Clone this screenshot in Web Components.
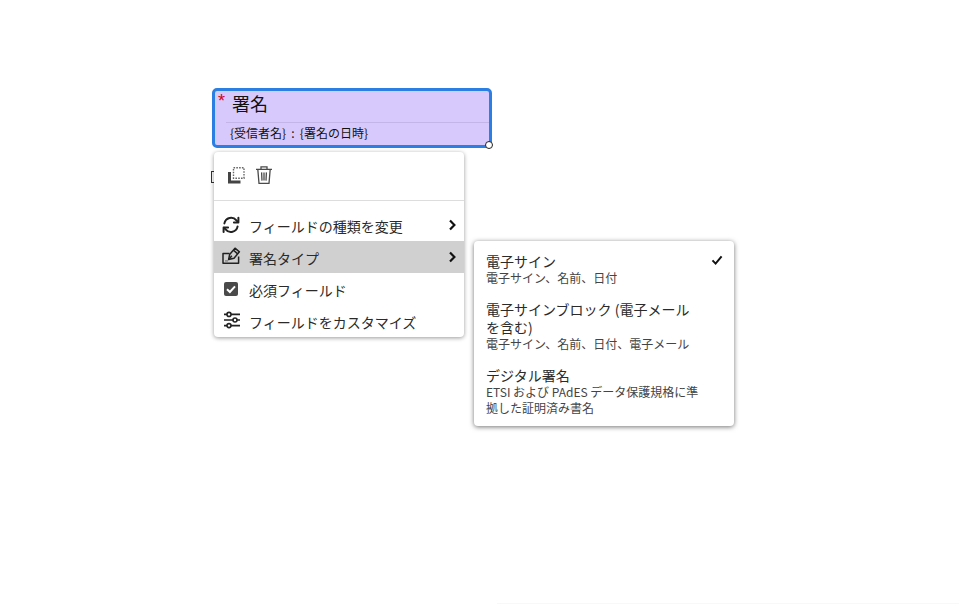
<!DOCTYPE html>
<html lang="ja">
<head>
<meta charset="utf-8">
<title>署名</title>
<style>
html, body { margin: 0; height: 100%; background: #fff; overflow: hidden; }
body { position: relative; width: 978px; height: 611px; font-family: "Noto Sans CJK JP", "Noto Sans", sans-serif; color: #222; }
sign-field { left: 212px; top: 88px; }
field-menu { left: 214px; top: 152px; }
type-menu { left: 474px; top: 241px; }
.stub { position: absolute; left: 211px; top: 171px; width: 5px; height: 12px; border: 1.5px solid #333; box-sizing: border-box; }
.edge { position: absolute; left: 497px; top: 603px; width: 462px; height: 1px; background: #f8f8f8; }
</style>
</head>
<body>
<div class="stub"></div>
<div class="edge"></div>

<sign-field label="署名" detail="{受信者名} : {署名の日時}"></sign-field>

<field-menu>
  <menu-row slot="rows" icon="refresh" arrow>フィールドの種類を変更</menu-row>
  <menu-row slot="rows" icon="sign" arrow active>署名タイプ</menu-row>
  <menu-row slot="rows" icon="check">必須フィールド</menu-row>
  <menu-row slot="rows" icon="sliders">フィールドをカスタマイズ</menu-row>
</field-menu>

<type-menu>
  <type-option title="電子サイン" checked>電子サイン、名前、日付</type-option>
  <type-option title="電子サインブロック (電子メールを含む)">電子サイン、名前、日付、電子メール</type-option>
  <type-option title="デジタル署名">ETSI および PAdES データ保護規格に準拠した証明済み書名</type-option>
</type-menu>

<script>
const ICONS = {
    refresh: `<svg viewBox="0 0 20 20" width="20" height="20" fill="none" stroke="#222" stroke-width="2" stroke-linecap="round" stroke-linejoin="round">
        <path d="M3.4 9.4A6.8 6.8 0 0 1 15.4 6.4L17 8"/><path d="M17.4 3.8V8.4H12.9"/>
        <path d="M16.6 12.4A6.8 6.8 0 0 1 4.6 15.4L3 13.8"/><path d="M2.6 18V13.4H7.1"/></svg>`,
    sign: `<svg viewBox="0 0 20 20" width="20" height="20" fill="none" stroke="#222" stroke-width="1.5" stroke-linejoin="round">
        <path d="M8.6 7.4H2V17.2H17.6V10.6"/>
        <path d="M7.6 13.6L8.6 8.6L14 2.2L18.4 5.8L13 12.2Z"/>
        <path d="M12.4 4.2L16.7 7.8" /><path d="M7.8 13.4L10.8 9.8"/>
        <path d="M4 14.9H7" stroke="#888"/></svg>`,
    check: `<svg viewBox="0 0 20 20" width="20" height="20"><rect x="3" y="4" width="14" height="14" rx="2" fill="#4a4a4a"/>
        <path d="M6 11.2L8.9 14L14 8.4" fill="none" stroke="#fff" stroke-width="2"/></svg>`,
    sliders: `<svg viewBox="0 0 20 20" width="20" height="20" fill="none" stroke="#222" stroke-width="1.6">
        <path d="M3 4.4H6M10 4.4H19M3 10H12M16 10H19M3 15.6H6M10 15.6H19"/>
        <circle cx="8" cy="4.4" r="2"/><circle cx="14" cy="10" r="2"/><circle cx="8" cy="15.6" r="2"/></svg>`
};

class SignField extends HTMLElement {
    connectedCallback() {
        this.attachShadow({ mode: 'open' });
        this.shadowRoot.innerHTML = `
            <style>
                :host {
                    position: absolute;
                    display: block;
                    box-sizing: border-box;
                    width: 280px;
                    height: 60px;
                    background: #d7c9fb;
                    border: 3px solid #2b7fe3;
                    border-radius: 5px;
                    color: #111;
                }
                .star {
                    position: absolute;
                    left: 3px;
                    top: 1px;
                    color: #d0021b;
                    font: 18px/18px "Liberation Sans", sans-serif;
                }
                .label {
                    height: 31px;
                    padding-left: 17px;
                    font-size: 18px;
                    line-height: 25px;
                }
                .detail {
                    margin-left: 11px;
                    border-top: 1px solid #c4b5e8;
                    padding-left: 4px;
                    font-size: 12px;
                    line-height: 19px;
                    word-spacing: 2.5px;
                }
                .handle {
                    position: absolute;
                    right: -4px;
                    bottom: -4px;
                    width: 8px;
                    height: 8px;
                    box-sizing: border-box;
                    border-radius: 50%;
                    background: #fff;
                    border: 1.2px solid #222;
                }
            </style>
            <span class="star">*</span>
            <div class="label">${this.getAttribute('label')}</div>
            <div class="detail">${this.getAttribute('detail')}</div>
            <span class="handle"></span>
        `;
    }
}

class FieldMenu extends HTMLElement {
    connectedCallback() {
        this.attachShadow({ mode: 'open' });
        this.shadowRoot.innerHTML = `
            <style>
                :host {
                    position: absolute;
                    display: block;
                    width: 250px;
                    background: #fff;
                    border-radius: 4px;
                    box-shadow: 0 1px 4px rgba(0, 0, 0, 0.4);
                    overflow: hidden;
                }
                .tools {
                    display: flex;
                    align-items: center;
                    gap: 8px;
                    height: 48px;
                    padding-left: 12px;
                    border-bottom: 1px solid #ddd;
                }
                .rows { display: block; padding-top: 8px; }
            </style>
            <div class="tools">
                <svg viewBox="0 0 20 20" width="20" height="20">
                    <path d="M2 6H5V14.4H14.5V17.5H2Z" fill="#444"/>
                    <rect x="7.5" y="1.7" width="10.5" height="10.5" fill="none" stroke="#666" stroke-width="1.4" stroke-dasharray="1.6 1.2"/>
                </svg>
                <svg viewBox="0 0 20 20" width="20" height="20" fill="none" stroke="#4a4a4a" stroke-width="1.3">
                    <path d="M2 3.4H18"/><path d="M7 3.2V0.8H13V3.2"/>
                    <path d="M3.8 3.4L5 17.4H15L16.2 3.4"/><path d="M7.6 6.4L8 14.6M10 6.4V14.6M12.4 6.4L12 14.6"/>
                </svg>
            </div>
            <slot class="rows" name="rows"></slot>
        `;
    }
}

class MenuRow extends HTMLElement {
    connectedCallback() {
        const active = this.hasAttribute('active');
        const arrow = this.hasAttribute('arrow');
        this.attachShadow({ mode: 'open' });
        this.shadowRoot.innerHTML = `
            <style>
                :host {
                    display: flex;
                    align-items: center;
                    height: 32px;
                    padding-left: 7px;
                    font-size: 14px;
                    color: #2a2a2a;
                    background: ${active ? '#d0d0d0' : 'transparent'};
                }
                .icon { display: flex; width: 20px; height: 20px; margin-right: 8px; margin-top: -2px; }
                .text { flex: 1; padding-top: 2px; }
                .arrow { margin-right: 7px; margin-top: 0; }
            </style>
            <span class="icon">${ICONS[this.getAttribute('icon')]}</span>
            <span class="text"><slot></slot></span>
            ${arrow ? `<svg class="arrow" viewBox="0 0 10 12" width="10" height="12" fill="none" stroke="#111" stroke-width="2.2"><path d="M3 1.5L7.4 6L3 10.5"/></svg>` : ''}
        `;
    }
}

class TypeMenu extends HTMLElement {
    connectedCallback() {
        this.attachShadow({ mode: 'open' });
        this.shadowRoot.innerHTML = `
            <style>
                :host {
                    position: absolute;
                    display: flex;
                    flex-direction: column;
                    gap: 14px;
                    box-sizing: border-box;
                    width: 260px;
                    height: 185px;
                    padding: 11px 12px;
                    background: #fff;
                    border-radius: 4px;
                    box-shadow: 0 1px 5px rgba(0, 0, 0, 0.55);
                }
            </style>
            <slot></slot>
        `;
    }
}

class TypeOption extends HTMLElement {
    connectedCallback() {
        this.attachShadow({ mode: 'open' });
        this.shadowRoot.innerHTML = `
            <style>
                :host {
                    position: relative;
                    display: block;
                    width: 216px;
                    color: #2a2a2a;
                }
                .title { font-size: 14px; line-height: 18px; }
                .desc { font-size: 12px; line-height: 16px; color: #444; }
                svg { position: absolute; right: -21px; top: 2px; }
            </style>
            <div class="title">${this.getAttribute('title')}</div>
            <div class="desc"><slot></slot></div>
            ${this.hasAttribute('checked') ? `<svg viewBox="0 0 12 12" width="12" height="12" fill="none" stroke="#111" stroke-width="2"><path d="M1.5 6.4L4.6 9.6L10.6 2.4"/></svg>` : ''}
        `;
    }
}

customElements.define('sign-field', SignField);
customElements.define('field-menu', FieldMenu);
customElements.define('menu-row', MenuRow);
customElements.define('type-menu', TypeMenu);
customElements.define('type-option', TypeOption);
</script>
</body>
</html>
